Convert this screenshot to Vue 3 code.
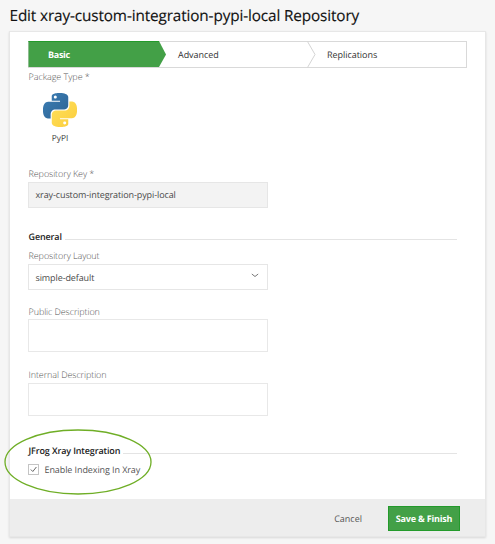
<script setup>
import { ref } from 'vue'

const indexing = ref(true)
</script>

<template>
  <main class="page">
    <h1 class="title"><span>Edit xray-custom-integration-pypi-local Repository</span></h1>
    <section class="card">
      <div class="content">
        <nav class="tabs">
          <svg class="tabs-shape" viewBox="0 0 439 27" aria-hidden="true">
            <rect x="0.5" y="0.5" width="438" height="26" fill="#fff" stroke="#d9d9d9" />
            <path d="M.5 0H131L138 13.5L131 26H.5Z" fill="#43a047" />
            <path d="M.5 .5H131" stroke="#239a2b" fill="none" />
            <path d="M279.500 .5L287 13.500L279.500 26.500" stroke="#d4d4d4" fill="none" />
          </svg>
          <a class="tab active"><span>Basic</span></a>
          <a class="tab"><span>Advanced</span></a>
          <a class="tab"><span>Replications</span></a>
        </nav>

        <div class="label package-label"><span>Package Type *</span></div>
        <div class="package">
          <svg class="python" viewBox="0 0 24 24" aria-hidden="true">
            <defs>
              <linearGradient id="blue" x1="0" y1="0" x2="1" y2="1">
                <stop offset="0" stop-color="#3d7fb5" />
                <stop offset="1" stop-color="#2b6293" />
              </linearGradient>
              <linearGradient id="yellow" x1="0" y1="0" x2="1" y2="1">
                <stop offset="0" stop-color="#ffe05c" />
                <stop offset="1" stop-color="#fbcd3b" />
              </linearGradient>
            </defs>
            <path fill="url(#blue)" d="M14.25.18l.9.2.73.26.59.3.45.32.34.34.25.34.16.33.1.3.04.26.02.2-.01.13V8.5l-.05.63-.13.55-.21.46-.26.38-.3.31-.33.25-.35.19-.35.14-.33.1-.3.07-.26.04-.21.02H8.77l-.69.05-.59.14-.5.22-.41.27-.33.32-.27.35-.2.36-.15.37-.1.35-.07.32-.04.27-.02.21v3.06H3.17l-.21-.03-.28-.07-.32-.12-.35-.18-.36-.26-.36-.36-.35-.46-.32-.59-.28-.73-.21-.88-.14-1.05-.05-1.23.06-1.22.16-1.04.24-.87.32-.71.36-.57.4-.44.42-.33.42-.24.4-.16.36-.1.32-.05.24-.01h.16l.06.01h8.16v-.83H6.18l-.01-2.75-.02-.37.05-.34.11-.31.17-.28.25-.26.31-.23.38-.2.44-.18.51-.15.58-.12.64-.1.71-.06.77-.04.84-.02 1.27.05zm-6.3 1.98l-.23.33-.08.41.08.41.23.34.33.22.41.09.41-.09.33-.22.23-.34.08-.41-.08-.41-.23-.33-.33-.22-.41-.09-.41.09z" />
            <path fill="url(#yellow)" d="M21.040 6.110l.28.06.32.12.35.18.36.27.36.35.35.47.32.59.28.73.21.88.14 1.04.05 1.23-.06 1.23-.16 1.04-.24.86-.32.71-.36.57-.4.45-.42.33-.42.24-.4.16-.36.09-.32.05-.24.02-.16-.01h-8.22v.82h5.84l.01 2.76.02.36-.05.34-.11.31-.17.29-.25.25-.31.24-.38.2-.44.17-.51.15-.58.13-.64.09-.71.07-.77.04-.84.01-1.27-.04-1.07-.14-.9-.2-.73-.25-.59-.3-.45-.33-.34-.34-.25-.34-.16-.33-.1-.3-.04-.25-.02-.2.01-.13v-5.34l.05-.64.13-.54.21-.46.26-.38.3-.32.33-.24.35-.2.35-.14.33-.1.3-.06.26-.04.21-.02.13-.01h5.84l.69-.05.59-.14.5-.21.41-.28.33-.32.27-.35.2-.36.15-.36.1-.35.07-.32.04-.28.02-.21V6.07h2.09l.14.01zm-6.47 14.25l-.23.33-.08.41.08.41.23.33.33.23.41.08.41-.08.33-.23.23-.33.08-.41-.08-.41-.23-.33-.33-.23-.41-.08-.41.08z" />
          </svg>
          <span class="package-name">PyPI</span>
        </div>

        <div class="label key-label"><span>Repository Key *</span></div>
        <div class="field disabled"><span>xray-custom-integration-pypi-local</span></div>

        <h2 class="section general"><span>General</span></h2>
        <div class="label layout-label"><span>Repository Layout</span></div>
        <div class="field select">
          <span>simple-default</span>
          <svg class="chevron" viewBox="0 0 8 5" aria-hidden="true">
            <path d="M.8 1L4 3.500L7.200 1" fill="none" stroke="#777" />
          </svg>
        </div>

        <div class="label description-label"><span>Public Description</span></div>
        <div class="area"></div>
        <div class="label description-label second"><span>Internal Description</span></div>
        <div class="area"></div>

        <div class="xray">
          <h2 class="section"><span>JFrog Xray Integration</span></h2>
          <label class="check">
            <input v-model="indexing" type="checkbox" class="check-input" />
            <svg class="box" viewBox="0 0 11 11" aria-hidden="true">
              <rect x=".5" y=".5" width="10" height="10" fill="#fff" stroke="#c4c4c4" />
              <path v-if="indexing" d="M2.800 5.500L4.800 7.500L8.400 3" fill="none" stroke="#666" stroke-width="1" />
            </svg>
            <span>Enable Indexing In Xray</span>
          </label>
          <svg class="ring" viewBox="0 0 148 66" aria-hidden="true">
            <ellipse cx="74" cy="33" rx="73" ry="32" fill="none" stroke="#6fae26" stroke-width="1.300" />
          </svg>
        </div>
      </div>
      <footer class="footer">
        <button class="cancel"><span>Cancel</span></button>
        <button class="save"><span>Save &amp; Finish</span></button>
      </footer>
    </section>
  </main>
</template>

<style>
body {
  background: #f6f6f6;
}
</style>

<style scoped>
* {
  box-sizing: border-box;
}
.page {
  width: 495px;
  height: 544px;
  padding: 5px 9px 0;
  overflow: hidden;
  background: #f6f6f6;
  font-family: "Open Sans", "Noto Sans", sans-serif;
  font-size: 9px;
  text-rendering: geometricPrecision;
  color: #444;
}
span {
  white-space: nowrap;
}
.title {
  margin: 0;
  height: 26px;
  padding-left: 0.5px;
  font-size: 15.3px;
  line-height: 22px;
  font-weight: 500;
  letter-spacing: -0.12px;
  color: #111;
  -webkit-text-stroke: 0.15px #111;
}
.card {
  width: 477px;
  height: 506px;
  display: flex;
  flex-direction: column;
  border: 1px solid #e7e7e7;
  background: #fff;
  box-shadow: 0 1px 2px rgba(0, 0, 0, 0.12);
}
.content {
  flex: 1;
  padding: 9px 18px 0;
}
.tabs {
  position: relative;
  display: grid;
  grid-template-columns: 149px 149px 1fr;
  width: 439px;
  height: 27px;
}
.tabs-shape {
  position: absolute;
  inset: 0;
  width: 439px;
  height: 27px;
}
.tab {
  position: relative;
  padding-left: 1px;
  line-height: 27px;
  letter-spacing: -0.04px;
  color: #333;
}
.tab.active {
  padding-left: 20px;
  font-weight: 700;
  letter-spacing: -0.3px;
  color: #fff;
}
.label {
  height: 14px;
  padding-left: 0.5px;
  line-height: 14px;
  font-weight: 300;
  letter-spacing: -0.09px;
  color: #555;
}
.package-label {
  margin-top: 2px;
  letter-spacing: -0.04px;
}
.package {
  display: flex;
  flex-direction: column;
  align-items: center;
  width: 64px;
  margin-top: 9px;
}
.python {
  width: 34px;
  height: 34px;
}
.package-name {
  margin-top: 6px;
  line-height: 12px;
  font-size: 8.4px;
}
.key-label {
  margin-top: 22px;
}
.field {
  display: flex;
  align-items: center;
  justify-content: space-between;
  width: 240px;
  height: 26px;
  padding: 0 8px 0 6.5px;
  border: 1px solid #e6e6e6;
  letter-spacing: -0.1px;
  color: #4a4a4a;
}
.field.disabled {
  margin-top: 1px;
  padding-bottom: 1px;
  background: #f3f3f3;
}
.chevron {
  width: 8px;
  height: 5px;
  margin-bottom: 3px;
}
.section {
  display: flex;
  align-items: center;
  width: 429px;
  height: 14px;
  margin: 0;
  padding-left: 0.5px;
  font-size: 9px;
  line-height: 14px;
  font-weight: 600;
  letter-spacing: -0.13px;
  color: #222;
}
.section::after {
  content: "";
  flex: 1;
  height: 1px;
  margin: 5px 0 0 3px;
  background: #e4e4e4;
}
.general {
  margin-top: 22px;
}
.layout-label {
  margin-top: 5px;
}
.select {
  margin-top: 1px;
}
.description-label {
  margin-top: 15px;
}
.description-label.second {
  height: 15px;
  margin-top: 16px;
}
.area {
  width: 240px;
  height: 33px;
  border: 1px solid #e8e8e8;
}
.xray {
  position: relative;
  margin-top: 28px;
}
.check {
  display: flex;
  align-items: center;
  gap: 5.5px;
  height: 14px;
  margin-top: 4px;
  letter-spacing: -0.09px;
  color: #555;
}
.check-input {
  position: absolute;
  opacity: 0;
}
.box {
  width: 11px;
  height: 11px;
}
.ring {
  position: absolute;
  left: -24px;
  top: -15px;
  width: 148px;
  height: 66px;
  pointer-events: none;
}
.footer {
  display: flex;
  justify-content: flex-end;
  align-items: center;
  gap: 26px;
  height: 37px;
  padding: 2px 25px 0 0;
  background: #ededed;
}
button {
  border: 0;
  padding: 0;
  background: none;
  font: inherit;
  text-rendering: inherit;
  color: #555;
}
.save {
  width: 72px;
  height: 25px;
  background: #43a047;
  border: 1px solid #239a2b;
  color: #fff;
  font-weight: 700;
  letter-spacing: -0.2px;
}
</style>
